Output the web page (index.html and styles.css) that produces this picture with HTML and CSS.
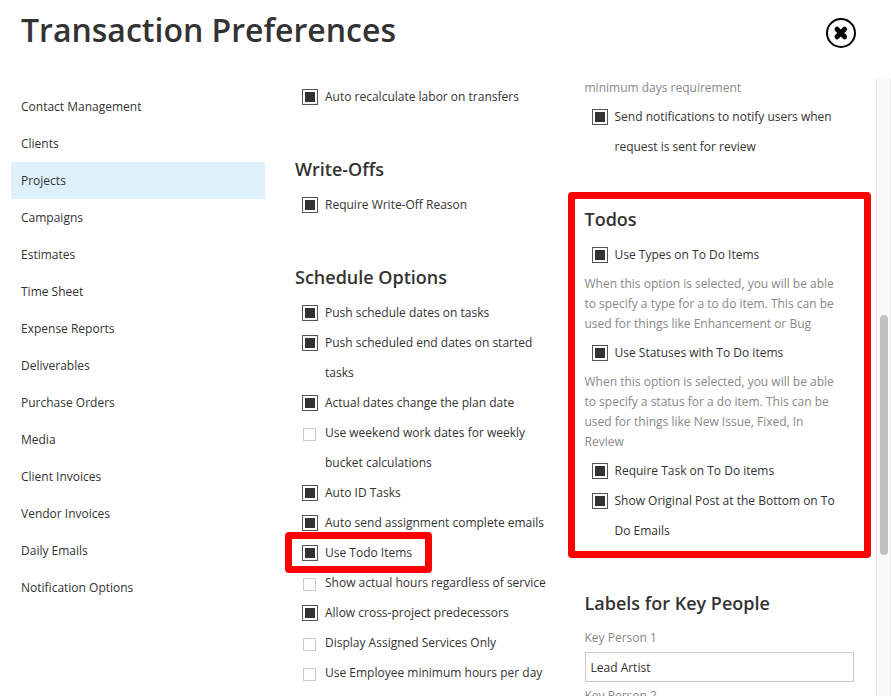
FILE: index.html
```html
<!DOCTYPE html>
<html lang="en">
<head>
    <meta charset="UTF-8">
    <meta name="viewport" content="width=device-width, initial-scale=1.0">
    <title>Transaction Preferences</title>
    <link rel="stylesheet" href="styles.css">
</head>
<body>
    <header class="page-header">
        <h1>Transaction Preferences</h1>
        <button type="button" class="close-btn" aria-label="Close">
            <svg width="30" height="30" viewBox="0 0 30 30">
                <circle cx="15" cy="15" r="14" fill="#fff" stroke="#000" stroke-width="2"/>
                <path d="M11 11.2 L18.6 18.8 M18.6 11.2 L11 18.8" stroke="#000" stroke-width="5" stroke-linecap="round"/>
            </svg>
        </button>
    </header>
    <div class="content">
        <nav class="sidebar">
            <a href="#">Contact Management</a>
            <a href="#">Clients</a>
            <a href="#" class="active">Projects</a>
            <a href="#">Campaigns</a>
            <a href="#">Estimates</a>
            <a href="#">Time Sheet</a>
            <a href="#">Expense Reports</a>
            <a href="#">Deliverables</a>
            <a href="#">Purchase Orders</a>
            <a href="#">Media</a>
            <a href="#">Client Invoices</a>
            <a href="#">Vendor Invoices</a>
            <a href="#">Daily Emails</a>
            <a href="#">Notification Options</a>
        </nav>
        <main class="options">
            <div class="column">
                <section class="group first">
                    <label class="option"><input type="checkbox" checked><span>Auto recalculate labor on transfers</span></label>
                </section>
                <section class="group">
                    <h2>Write-Offs</h2>
                    <label class="option"><input type="checkbox" checked><span>Require Write-Off Reason</span></label>
                </section>
                <section class="group">
                    <h2>Schedule Options</h2>
                    <label class="option"><input type="checkbox" checked><span>Push schedule dates on tasks</span></label>
                    <label class="option"><input type="checkbox" checked><span>Push scheduled end dates on started tasks</span></label>
                    <label class="option"><input type="checkbox" checked><span>Actual dates change the plan date</span></label>
                    <label class="option"><input type="checkbox"><span>Use weekend work dates for weekly bucket calculations</span></label>
                    <label class="option"><input type="checkbox" checked><span>Auto ID Tasks</span></label>
                    <label class="option"><input type="checkbox" checked><span>Auto send assignment complete emails</span></label>
                    <label class="option marked"><input type="checkbox" checked><span>Use Todo Items</span></label>
                    <label class="option"><input type="checkbox"><span>Show actual hours regardless of service</span></label>
                    <label class="option"><input type="checkbox" checked><span>Allow cross-project predecessors</span></label>
                    <label class="option"><input type="checkbox"><span>Display Assigned Services Only</span></label>
                    <label class="option"><input type="checkbox"><span>Use Employee minimum hours per day</span></label>
                </section>
            </div>
            <div class="column">
                <section class="group">
                    <p class="hint">minimum days requirement</p>
                    <label class="option"><input type="checkbox" checked><span>Send notifications to notify users when request is sent for review</span></label>
                </section>
                <section class="group marked">
                    <h2>Todos</h2>
                    <label class="option"><input type="checkbox" checked><span>Use Types on To Do Items</span></label>
                    <p class="hint">When this option is selected, you will be able to specify a type for a to do item. This can be used for things like Enhancement or Bug</p>
                    <label class="option"><input type="checkbox" checked><span>Use Statuses with To Do items</span></label>
                    <p class="hint">When this option is selected, you will be able to specify a status for a do item. This can be used for things like New Issue, Fixed, In Review</p>
                    <label class="option"><input type="checkbox" checked><span>Require Task on To Do items</span></label>
                    <label class="option"><input type="checkbox" checked><span>Show Original Post at the Bottom on To Do Emails</span></label>
                </section>
                <section class="group">
                    <h2>Labels for Key People</h2>
                    <label class="hint" for="person1">Key Person 1</label>
                    <input type="text" class="text-box" id="person1" value="Lead Artist">
                    <label class="hint" for="person2">Key Person 2</label>
                    <input type="text" class="text-box" id="person2">
                </section>
            </div>
        </main>
        <div class="scrollbar"><div class="thumb"></div></div>
    </div>
</body>
</html>
```
FILE: styles.css
```css
* {
    box-sizing: border-box;
}

body {
    display: flex;
    flex-direction: column;
    height: 100vh;
    margin: 0;
    overflow: hidden;
    background-color: #fff;
    color: #333;
    font-family: "Open Sans", sans-serif;
    font-size: 12px;
}

h1, h2, p {
    margin: 0;
}

.page-header {
    display: flex;
    flex-shrink: 0;
    justify-content: space-between;
    height: 78px;
    padding: 0 35px 0 21px;
}

.page-header h1 {
    font-size: 32px;
    font-weight: 600;
    line-height: 60px;
}

.close-btn {
    height: 30px;
    margin-top: 18px;
    padding: 0;
    border: none;
    background: none;
    cursor: pointer;
}

.close-btn svg {
    display: block;
}

.content {
    display: flex;
    flex: 1;
    min-height: 0;
}

/* left menu */
.sidebar {
    flex: 0 0 254px;
    margin-left: 11px;
    padding-top: 10px;
}

.sidebar a {
    display: block;
    padding: 0 10px;
    color: #333;
    line-height: 37px;
    text-decoration: none;
}

.sidebar .active {
    background-color: #def0fa;
}

/* option columns */
.options {
    display: flex;
    flex: 1;
    gap: 20px;
    padding: 0 22px 0 30px;
    overflow: hidden;
}

.column {
    flex: 1;
    min-width: 0;
}

.group {
    margin-bottom: 38px;
}

.group.first {
    padding-top: 4px;
}

.group h2 {
    padding-bottom: 2px;
    font-size: 18px;
    font-weight: 600;
    line-height: 38px;
}

.option {
    display: flex;
    align-items: flex-start;
    padding-left: 7px;
    line-height: 30px;
}

.option span {
    padding: 0 10px 0 7px;
}

.option input {
    appearance: none;
    flex-shrink: 0;
    width: 13px;
    height: 13px;
    margin: 10px 2px 0 1px;
    border: 1px solid #ccc;
    background-color: #fff;
}

.option input:checked {
    width: 16px;
    height: 16px;
    margin: 7px 0 0;
    border-color: #555;
    background-color: #333;
    box-shadow: inset 0 0 0 2px #fff;
}

.hint {
    display: block;
    padding: 0 16px 4px 0;
    color: #888;
    line-height: 20px;
}

.option + .hint, h2 + .hint, .text-box + .hint {
    padding-top: 4px;
}

.text-box {
    display: block;
    width: 100%;
    height: 30px;
    padding: 0 5px;
    border: 1px solid #ccc;
    color: #333;
    font-family: inherit;
    font-size: 12px;
}

/* red frames */
.marked {
    position: relative;
}

.marked::after {
    content: "";
    position: absolute;
    top: -8px;
    right: -17px;
    bottom: -12px;
    left: -17px;
    border: 7px solid #f00;
    border-radius: 4px;
    pointer-events: none;
}

.option.marked {
    width: fit-content;
}

.option.marked::after {
    top: -6px;
    right: -10px;
    bottom: -5px;
    left: -10px;
}

.scrollbar {
    width: 15px;
    border: 1px solid #e8e8e8;
    border-width: 0 1px;
    background-color: #fafafa;
}

.thumb {
    width: 8px;
    height: 240px;
    margin: 237px auto 0;
    border-radius: 4px;
    background-color: #c1c1c1;
}
```
